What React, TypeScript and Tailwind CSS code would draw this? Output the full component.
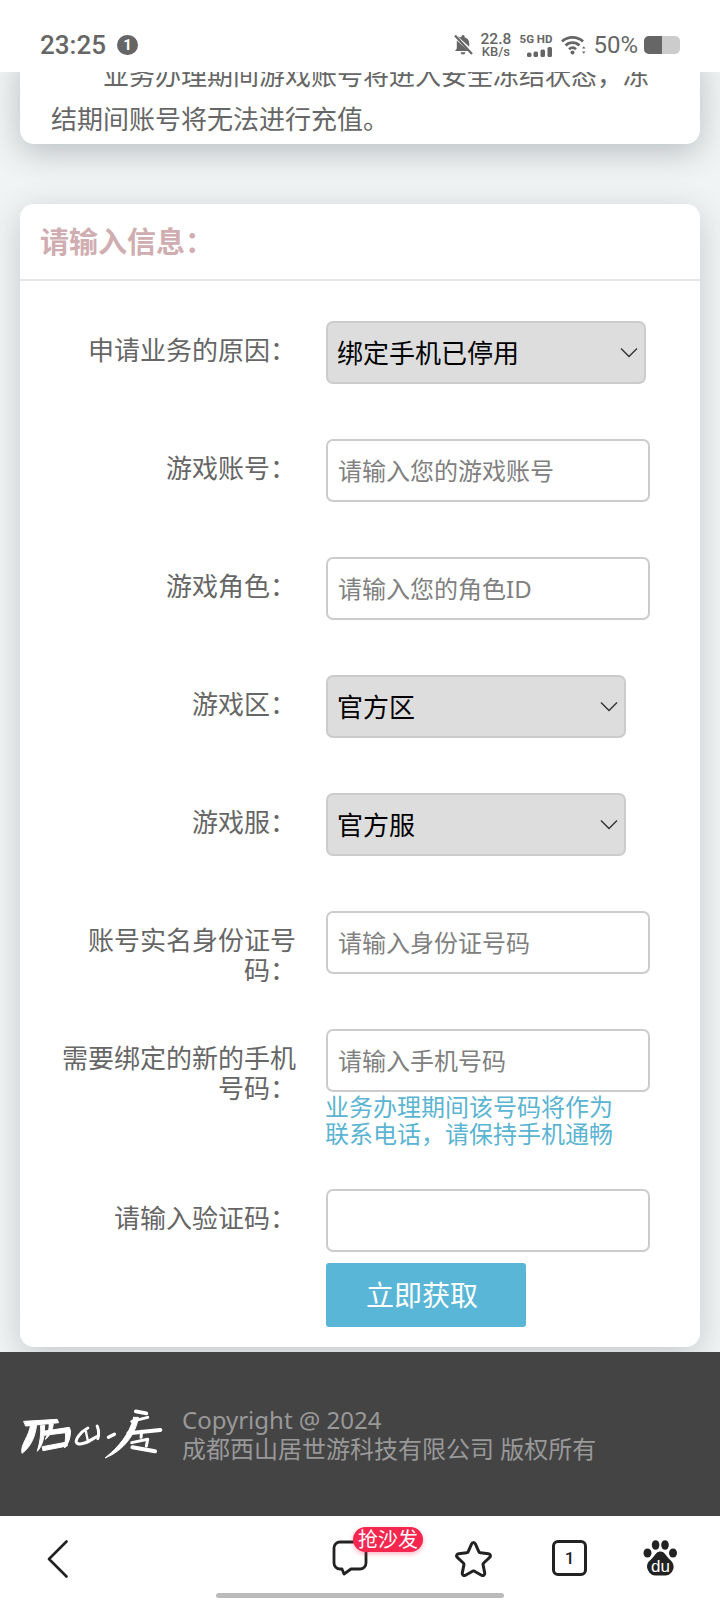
import React from "react";

const Label = ({ children }: { children: React.ReactNode }) => (
  <div className="ml-[36px] mr-[30px] h-[63px] w-[240px] shrink-0 pt-[14px] text-right text-[26px] leading-[30px] text-[#666]">
    {children}
  </div>
);

const Row = ({ label, mb = "mb-[55px]", children }: { label: string; mb?: string; children: React.ReactNode }) => (
  <div className={`flex items-start ${mb}`}>
    <Label>{label}</Label>
    <div className="flex flex-col items-start">{children}</div>
  </div>
);

const Field = ({ placeholder }: { placeholder?: string }) => (
  <input
    readOnly
    placeholder={placeholder}
    className="h-[63px] w-[324px] rounded-[7px] border-2 border-[#ccc] bg-white px-[10px] text-[24px] text-[#333] outline-none placeholder:text-[#808080]"
  />
);

const Sel = ({ value, w }: { value: string; w: string }) => (
  <div className={`relative h-[63px] ${w}`}>
    <select
      defaultValue={value}
      className="h-full w-full appearance-none rounded-[7px] border-2 border-[#ccc] bg-[#ddd] pl-[9px] pt-[2px] text-[26px] text-black outline-none"
    >
      <option>{value}</option>
    </select>
    <svg className="absolute right-[8px] top-[26px]" width="18" height="11" viewBox="0 0 18 11" fill="none">
      <path d="M1 1.5 L9 9.5 L17 1.5" stroke="#333" strokeWidth="1.4" />
    </svg>
  </div>
);

const StatusBar = () => (
  <div className="flex h-[72px] items-center bg-white pl-[40px] pr-[40px] pt-[18px] text-[#666]">
    <span className="font-['Roboto',sans-serif] text-[26px] font-medium leading-none">23:25</span>
    <span className="ml-[11px] flex h-[20px] w-[21px] items-center justify-center rounded-full bg-[#666] font-['Roboto',sans-serif] text-[15px] font-bold leading-none text-white">
      1
    </span>
    <svg className="ml-auto" width="20" height="22" viewBox="0 0 20 22" fill="#666">
      <path d="M10 1a1.6 1.6 0 0 1 1.6 1.6v.6c3 .8 4.6 3.2 4.600 6.200v3.400L5.200 2.800C5.900 2.600 7 3.400 8.400 3.200v-.6A1.600 1.600 0 0 1 10 1z" />
      <path d="M3.800 6.600 15.600 17H2l1.800-2.600zM7.600 18.200h4.800a2.400 2.400 0 0 1-4.800 0z" />
      <path d="M2 1.500 19 20" stroke="#666" strokeWidth="2.2" />
    </svg>
    <div className="ml-[7px] flex w-[31px] flex-col items-center font-['Roboto',sans-serif] text-[#666]">
      <span className="text-[15.5px] font-medium leading-[13px]">22.8</span>
      <span className="text-[13px] font-medium leading-[12px]">KB/s</span>
    </div>
    <div className="ml-[8px] flex w-[33px] flex-col items-end">
      <span className="whitespace-nowrap font-['Roboto',sans-serif] text-[11.500px] font-bold leading-[12px]">5G HD</span>
      <svg width="25" height="10" viewBox="0 0 25 10" fill="#666" className="mt-[2px]">
        <rect x="0" y="5.500" width="4.500" height="4.500" rx="1.500" />
        <rect x="6.500" y="4.500" width="4.500" height="5.500" rx="1.500" />
        <rect x="13.500" y="2.500" width="4.500" height="7.500" rx="1.500" />
        <rect x="20.500" y="0" width="4.500" height="10" rx="1.500" />
      </svg>
    </div>
    <svg className="ml-[9px]" width="25" height="20" viewBox="0 0 25 20" fill="none" stroke="#666" strokeWidth="2.800">
      <path d="M1 6.500C6.600 1 16.400 1 22 6.500" />
      <path d="M4.600 10.400C8.400 6.800 14.600 6.800 18.400 10.400" />
      <path d="M8 14.200c2.200-1.900 4.900-1.900 7 0" />
      <circle cx="11.500" cy="17.400" r="2" fill="#666" stroke="none" />
      <path d="M21 13.500h3.500l-1.750-2.200zM21 16.500h3.500l-1.750 2.200z" fill="#666" stroke="none" />
    </svg>
    <span className="ml-[7px] font-['Roboto',sans-serif] text-[24px] font-normal leading-none">50%</span>
    <div className="ml-[6px] flex h-[18px] w-[36px] overflow-hidden rounded-[5px] bg-[#ccc]">
      <div className="h-full w-[18px] bg-[#666]" />
    </div>
  </div>
);

const Logo = () => (
  <svg className="ml-[20px] shrink-0" width="143" height="50" viewBox="60 65 430 150" fill="#fff" stroke="#fff" strokeLinecap="round" strokeLinejoin="round">
    <path d="M72 102 L172 96 L176 106 L78 116 Z" strokeWidth="3" />
    <path d="M92 110 L110 108 C108 145 92 180 66 198 C60 170 88 150 92 110 Z" strokeWidth="3" />
    <path d="M122 116 L134 114 C134 150 128 175 112 192 C120 165 124 140 122 116 Z" strokeWidth="3" />
    <path d="M148 110 L160 110 C158 130 150 146 136 156 C144 142 148 126 148 110 Z" strokeWidth="3" />
    <path d="M130 132 L208 120 L212 130 C212 150 206 170 194 182 C196 160 198 146 196 136 L134 144 Z" strokeWidth="3" />
    <path d="M128 178 L202 164 L202 176 L130 190 Z" strokeWidth="3" />
    <path fill="none" d="M264 122 C240 135 222 160 232 168 C248 176 270 160 290 148" strokeWidth="9" />
    <path fill="none" d="M258 132 L264 160" strokeWidth="7" />
    <path fill="none" d="M292 116 C298 130 298 140 294 154" strokeWidth="9" />
    <path fill="none" d="M326 150 L344 141" strokeWidth="10" />
    <path d="M402 90 L416 90 C408 140 372 190 316 212 C356 180 390 140 402 90 Z" strokeWidth="3" />
    <path fill="none" d="M408 72 L440 78" strokeWidth="11" />
    <path fill="none" d="M396 102 L444 90" strokeWidth="9" />
    <path fill="none" d="M386 138 L482 128" strokeWidth="12" />
    <path fill="none" d="M426 132 L424 150" strokeWidth="9" />
    <path fill="none" d="M396 166 L444 156 L440 176" strokeWidth="9" />
    <path fill="none" d="M398 180 L466 192" strokeWidth="12" />
  </svg>
);

const Paw = () => (
  <svg width="35" height="36" viewBox="0 0 35 36" fill="#222">
    <ellipse cx="4.500" cy="13" rx="4" ry="4.600" />
    <ellipse cx="12.600" cy="5" rx="3.800" ry="4.800" />
    <ellipse cx="22" cy="5" rx="3.800" ry="4.800" />
    <ellipse cx="30" cy="13" rx="4" ry="4.600" />
    <path d="M17.300 11.500c4.600 0 6 5 9.500 8 3.500 3 4.500 6.500 3.500 9.500-1.200 3.600-4.300 6.500-7.500 6.500H12c-3.200 0-6.300-2.900-7.500-6.500-1-3-.5-6.500 3.500-9.500 3.500-3 4.700-8 9.300-8z" />
    <text x="17.400" y="32" textAnchor="middle" fontSize="17" fontWeight="400" fill="#fff" fontFamily="'Liberation Sans', sans-serif">du</text>
  </svg>
);

const BottomBar = () => (
  <div className="flex h-[84px] flex-col bg-white">
    <div className="flex h-[77px] items-start pt-[24px]">
      <svg className="ml-[47px]" width="22" height="38" viewBox="0 0 22 38" fill="none" stroke="#222" strokeWidth="2.600" strokeLinecap="round" strokeLinejoin="round">
        <path d="M19.500 1.500 2 19l17.500 17.500" />
      </svg>
      <div className="relative ml-[263px]">
        <svg width="36" height="36" viewBox="0 0 36 36" fill="none" stroke="#222" strokeWidth="2.800" strokeLinejoin="round">
          <path d="M8 2h20a6 6 0 0 1 6 6v15a6 6 0 0 1-6 6H19l-7 5-2-5H8a6 6 0 0 1-6-6V8a6 6 0 0 1 6-6z" />
        </svg>
        <span className="absolute left-[21px] top-[-13px] flex h-[25px] w-[70px] items-center justify-center rounded-full bg-[#f5274f] text-[20px] leading-none text-white shadow-[0_2px_5px_rgba(245,39,79,0.35)]">
          抢沙发
        </span>
      </div>
      <svg className="ml-[86px]" width="39" height="37" viewBox="0 0 39 37" fill="none" stroke="#222" strokeWidth="3" strokeLinejoin="round">
        <path d="M19.500 2.500c1 0 1.600.8 2 1.700l3.300 7.400c.3.700.9 1.100 1.600 1.200l8 1c2 .3 2.700 2.300 1.300 3.600l-6 5.600c-.5.5-.8 1.200-.6 1.900l1.600 8c.4 2-1.500 3.300-3.200 2.300l-7-4c-.6-.3-1.400-.3-2 0l-7 4c-1.700 1-3.600-.3-3.200-2.300l1.600-8c.2-.7-.1-1.400-.6-1.900l-6-5.600c-1.400-1.300-.7-3.300 1.300-3.600l8-1c.7-.1 1.300-.5 1.600-1.200l3.300-7.400c.4-.9 1-1.700 2-1.700z" />
      </svg>
      <div className="ml-[59px] flex h-[36px] w-[35px] items-center justify-center rounded-[6px] border-[3px] border-[#222] font-['Roboto',sans-serif] text-[17px] font-medium leading-none text-[#222]">
        1
      </div>
      <div className="ml-[56px]">
        <Paw />
      </div>
    </div>
    <div className="mx-auto h-[5px] w-[288px] rounded-full bg-[#bbb]" />
  </div>
);

export default function App() {
  return (
    <div className="flex h-[1600px] w-[720px] flex-col overflow-hidden bg-white font-['Noto_Sans','Noto_Sans_CJK_SC',sans-serif]">
      <StatusBar />
      <div className="h-[1280px] overflow-hidden bg-[#f1f4f5] px-[20px]">
        <div className="-mt-[19px] rounded-b-[14px] bg-white pb-[3px] pl-[31px] pr-[31px] pt-0 shadow-[0_8px_32px_rgba(40,50,55,0.28)]">
          <p className="indent-[52px] text-[26px] leading-[44px] text-[#666]">
            业务办理期间游戏账号将进入安全冻结状态，冻结期间账号将无法进行充值。
          </p>
        </div>
        <div className="mt-[60px] rounded-[14px] bg-white pb-[20px] shadow-[0_8px_32px_rgba(40,50,55,0.22)]">
          <div className="flex h-[77px] items-center border-b-2 border-[#e4e6e7] pl-[20px] text-[29px] font-bold text-[#cfadb0]">
            请输入信息：
          </div>
          <div className="pt-[40px]">
            <Row label="申请业务的原因："><Sel value="绑定手机已停用" w="w-[320px]" /></Row>
            <Row label="游戏账号："><Field placeholder="请输入您的游戏账号" /></Row>
            <Row label="游戏角色："><Field placeholder="请输入您的角色ID" /></Row>
            <Row label="游戏区："><Sel value="官方区" w="w-[300px]" /></Row>
            <Row label="游戏服："><Sel value="官方服" w="w-[300px]" /></Row>
            <Row label="账号实名身份证号码："><Field placeholder="请输入身份证号码" /></Row>
            <Row label="需要绑定的新的手机号码：" mb="mb-[42px]">
              <Field placeholder="请输入手机号码" />
              <p className="-ml-px mt-[1px] w-[296px] text-[24px] leading-[27px] text-[#5ab4d2]">
                业务办理期间该号码将作为联系电话，请保持手机通畅
              </p>
            </Row>
            <Row label="请输入验证码：" mb="mb-0">
              <Field />
              <button className="mt-[11px] h-[64px] w-[200px] rounded-[3px] bg-[#5ab6d6] pb-[1px] pr-[8px] text-[28px] text-white">
                立即获取
              </button>
            </Row>
          </div>
        </div>
      </div>
      <div className="flex h-[164px] items-center bg-[#444]">
        <Logo />
        <div className="ml-[19px] text-[24px] leading-[29px] text-[#999]">
          <div>Copyright @ 2024</div>
          <div>成都西山居世游科技有限公司 版权所有</div>
        </div>
      </div>
      <BottomBar />
    </div>
  );
}
